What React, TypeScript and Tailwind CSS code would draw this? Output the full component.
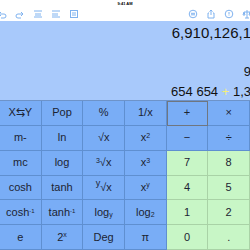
import React from "react";

const keys: { label: React.ReactNode; green?: boolean; sel?: boolean }[][] = [
  [{ label: "X⇆Y" }, { label: "Pop" }, { label: "%" }, { label: "1/x" }, { label: "+", sel: true }, { label: "×" }],
  [{ label: "m-" }, { label: "ln" }, { label: "√x" }, { label: <>x<sup className="text-[7px]">2</sup></> }, { label: "−" }, { label: "÷" }],
  [
    { label: "mc" },
    { label: "log" },
    { label: <><sup className="text-[7px]">3</sup>√x</> },
    { label: <>x<sup className="text-[7px]">3</sup></> },
    { label: "7", green: true },
    { label: "8", green: true },
  ],
  [
    { label: "cosh" },
    { label: "tanh" },
    { label: <><sup className="text-[9px]">y</sup>√x</> },
    { label: <>x<sup className="text-[7px]">y</sup></> },
    { label: "4", green: true },
    { label: "5", green: true },
  ],
  [
    { label: <>cosh<sup className="text-[6px]">-1</sup></> },
    { label: <>tanh<sup className="text-[6px]">-1</sup></> },
    { label: <>log<sub className="text-[7px]">y</sub></> },
    { label: <>log<sub className="text-[7px]">2</sub></> },
    { label: "1", green: true },
    { label: "2", green: true },
  ],
  [
    { label: "e" },
    { label: <>2<sup className="text-[7px]">x</sup></> },
    { label: "Deg" },
    { label: "π" },
    { label: "0", green: true },
    { label: ".", green: true },
  ],
];

function Ico({ children }: { children: React.ReactNode }) {
  return (
    <svg width="10" height="10" viewBox="0 0 10 10" fill="none" stroke="#7fb2ef" strokeWidth="1">
      {children}
    </svg>
  );
}

export default function App() {
  return (
    <div className="w-[250px] h-[250px] overflow-hidden bg-white flex flex-col" style={{ fontFamily: "Helvetica, 'Liberation Sans', Arial, sans-serif" }}>
      {/* status bar */}
      <div className="h-[7px] flex justify-center items-center text-[4px] font-semibold text-black">9:41 AM</div>
      {/* toolbar */}
      <div className="h-[14px] flex items-center justify-between">
        <div className="flex items-center gap-[8px] -ml-[3px]">
          <Ico><path d="M2 5h5a2 2 0 0 1 0 4H4M2 5l2-2M2 5l2 2" /></Ico>
          <Ico><path d="M8 5H3a2 2 0 0 0 0 4h3M8 5L6 3M8 5L6 7" /></Ico>
          <Ico><path d="M1 2h8M1 8h8M3 4v3M5 4v3M7 4v3" /></Ico>
          <Ico><path d="M1 2h8M1 8h8M2 4v3M4 4v3M6 4v3" /></Ico>
          <Ico><rect x="1.5" y="1.5" width="7" height="7" /><path d="M3 4h4M3 6h4" /></Ico>
        </div>
        <div className="flex items-center gap-[8px] -mr-[2px]">
          <Ico><circle cx="5" cy="5" r="3.8" /><path d="M3 4.3h4M3 5.8h4" /></Ico>
          <Ico><path d="M3 4H2v5h6V4H7M5 1v5M3.5 2.5 5 1l1.5 1.5" /></Ico>
          <Ico><circle cx="5" cy="5" r="3.8" /><path d="M5 3v2.5M5 6.5v.5" /></Ico>
          <Ico><path d="M5 1v8M2 3h6M2 3 1 6h2L2 3M8 3 7 6h2L8 3M3 9h4" /></Ico>
        </div>
      </div>
      {/* display */}
      <div className="h-[79px] bg-[#a8c9fb] flex flex-col items-end text-[#111]">
        <div className="text-[15px] leading-none mt-[4px] -mr-[1px] whitespace-nowrap">6,910,126,1</div>
        <div className="text-[13px] leading-none mt-[25px] -mr-[1px]">9</div>
        <div className="text-[13px] leading-none mt-[7px] -mr-[1px] whitespace-nowrap">
          654 654 <span className="text-[#f3ee7a]">+</span> 1,3
        </div>
      </div>
      {/* keypad */}
      <div className="grid grid-cols-6 grid-rows-6 flex-1 border-t border-[#6d93c9]">
        {keys.flat().map((k, i) => (
          <div
            key={i}
            className={
              "flex items-center justify-center text-[11px] text-[#1c2433] border-r border-b " +
              (k.green ? "bg-[#c8f6c6] border-[#a9d2a6] " : "bg-[#79adf6] border-[#5f8fd0] ") +
              (k.sel ? "outline outline-1 outline-[#6f7680] -outline-offset-1" : "")
            }
          >
            <span className="leading-none">{k.label}</span>
          </div>
        ))}
      </div>
    </div>
  );
}
